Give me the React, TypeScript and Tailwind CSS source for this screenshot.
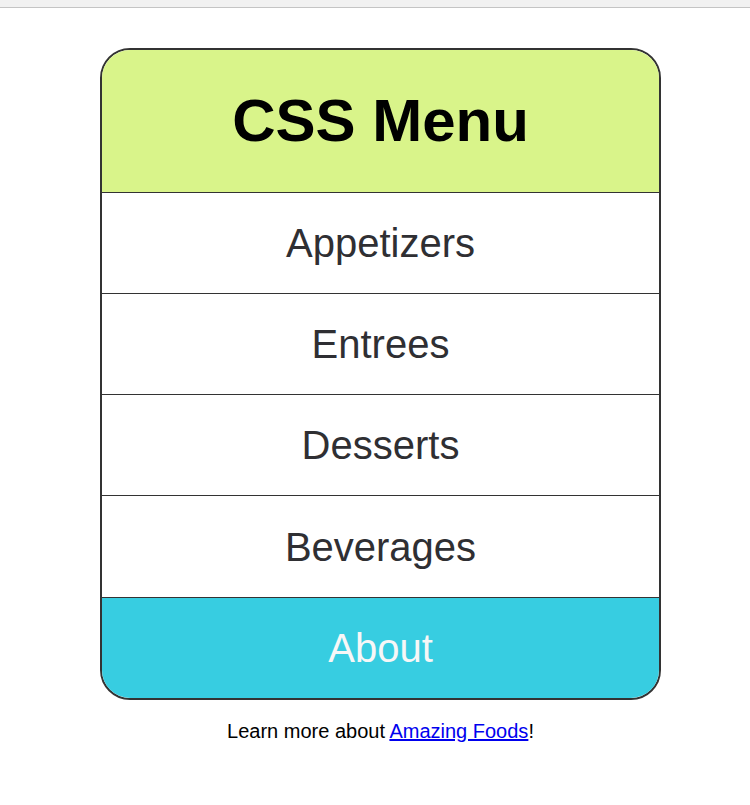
import React from "react";

const items = [
  { label: "Appetizers", h: "h-[101px]" },
  { label: "Entrees", h: "h-[101px]" },
  { label: "Desserts", h: "h-[101px]" },
  { label: "Beverages", h: "h-[102px]" },
];

const App: React.FC = () => {
  return (
    <div
      className="min-h-[805px] bg-white"
      style={{ fontFamily: '"Liberation Sans", Arial, sans-serif' }}
    >
      {/* browser-ish top strip */}
      <div className="h-[8px] bg-[#f1f1f1] border-b border-[#c4c4c4]" />

      <div className="ml-[100px] mt-[40px] w-[561px] overflow-hidden rounded-[30px] border-2 border-[#333333]">
        <div className="h-[142px] bg-[#d9f48a] flex items-center justify-center">
          <h1 className="text-[60px] font-bold text-black leading-none">CSS Menu</h1>
        </div>
        {items.map((item) => (
          <div
            key={item.label}
            className={`${item.h} border-t border-[#333333] bg-white flex items-center justify-center text-[40px] text-[#2f2f33]`}
          >
            {item.label}
          </div>
        ))}
        <div className="h-[101px] border-t border-[#333333] bg-[#37cde1] flex items-center justify-center text-[40px] text-[#f7f7f7]">
          About
        </div>
      </div>

      <p className="mt-[16px] ml-[100px] w-[561px] text-center text-[20px] text-black">
        Learn more about{" "}
        <a href="#" className="text-[#0000ee] underline">
          Amazing Foods
        </a>
        !
      </p>
    </div>
  );
};

export default App;
